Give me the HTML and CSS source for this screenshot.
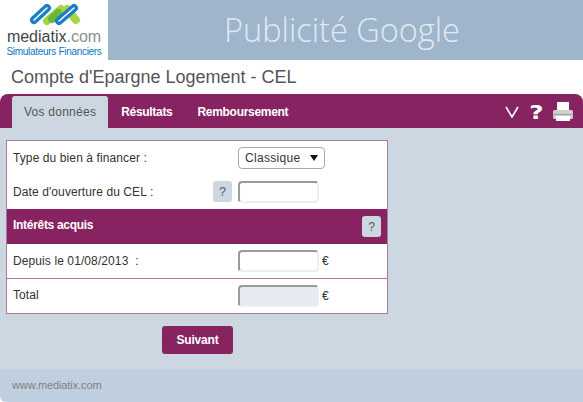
FILE: index.html
```html
<!DOCTYPE html>
<html>
<head>
    <meta charset="UTF-8">
    <title>Compte d'Epargne Logement - CEL</title>
    <link rel="stylesheet" href="styles.css">
</head>
<body>
<div class="top">
    <div class="logo">
        <svg class="logo-mark" width="54" height="25" viewBox="28 3 54 25">
            <g stroke-width="8" stroke-linecap="round" fill="none">
                <line x1="47" y1="21" x2="61" y2="9" stroke="#a4d645"/>
                <line x1="67" y1="9" x2="76" y2="20" stroke="#a4d645"/>
                <line x1="52" y1="19" x2="58" y2="13" stroke="#6cb536"/>
                <line x1="34" y1="20" x2="47" y2="8" stroke="#1b7fc4"/>
                <line x1="59" y1="21" x2="74" y2="8" stroke="#1b7fc4"/>
            </g>
            <g stroke="#ffffff" stroke-width="1.5" stroke-linecap="round">
                <line x1="34" y1="20" x2="47" y2="8"/>
                <line x1="59" y1="21" x2="74" y2="8"/>
            </g>
        </svg>
        <div class="logo-name">mediatix<span class="logo-com">.com</span></div>
        <div class="logo-sub">Simulateurs Financiers</div>
    </div>
    <div class="banner">Publicité Google</div>
</div>

<h1 class="title">Compte d'Epargne Logement - CEL</h1>

<div class="tabbar">
    <a class="tab active">Vos données</a>
    <a class="tab">Résultats</a>
    <a class="tab">Remboursement</a>
    <div class="tools">
        <svg class="tool-v" width="14" height="12" viewBox="0 0 14 12">
            <polyline points="1,1 7,11 13,1" fill="none" stroke="#ffffff" stroke-width="1.6"/>
        </svg>
        <span class="tool-help">?</span>
        <svg width="20" height="20" viewBox="0 0 20 20">
            <rect x="4" y="0" width="12" height="9" fill="#ffffff"/>
            <rect x="0" y="8" width="20" height="9" rx="1.5" fill="#cfcfcf"/>
            <rect x="0" y="12" width="20" height="1" fill="#a0a0a0"/>
            <rect x="3" y="14" width="14" height="5" fill="#ffffff"/>
        </svg>
    </div>
</div>

<div class="content">
    <div class="box">
        <div class="row row-first">
            <label class="lbl">Type du bien à financer :</label>
            <div class="field">
                <div class="select"><span>Classique</span><span class="arrow"></span></div>
            </div>
        </div>
        <div class="row row-second">
            <label class="lbl">Date d'ouverture du CEL :</label>
            <button class="help">?</button>
            <div class="field"><input class="inp" type="text"></div>
        </div>
        <div class="section">
            <span>Intérêts acquis</span>
            <button class="help">?</button>
        </div>
        <div class="row row-amount">
            <label class="lbl">Depuis le 01/08/2013 &nbsp;:</label>
            <div class="field"><input class="inp" type="text"><span class="euro">€</span></div>
        </div>
        <div class="row row-total">
            <label class="lbl lbl-total">Total</label>
            <div class="field"><input class="inp inp-off" type="text" disabled><span class="euro">€</span></div>
        </div>
    </div>
    <div class="actions">
        <button class="next">Suivant</button>
    </div>
</div>

<div class="footer">www.mediatix.com</div>
</body>
</html>
```

FILE: styles.css
```css
body {
    margin: 0;
    background-color: #FFFFFF;
    font-family: "Liberation Sans", Arial, sans-serif;
    font-size: 12px;
    color: #333333;
}

.top {
    display: flex;
    height: 60px;
}

.logo {
    width: 108px;
    flex: none;
    text-align: center;
    overflow: hidden;
}

.logo-mark {
    display: block;
    margin: 3px 0 0 28px;
}

.logo-name {
    font-size: 16px;
    line-height: 18px;
    color: #444444;
    white-space: nowrap;
}

.logo-com {
    color: #8a8f94;
}

.logo-sub {
    font-size: 10px;
    line-height: 12px;
    color: #0b76bd;
    white-space: nowrap;
    letter-spacing: -0.3px;
}

.banner {
    flex: 1;
    background-color: #9FB5CC;
    color: #E2E9F0;
    font-family: "Open Sans", sans-serif;
    font-weight: 300;
    font-size: 32.5px;
    line-height: 60px;
    text-align: center;
    padding-right: 7px;
}

.title {
    margin: 0;
    padding-left: 11px;
    height: 34px;
    line-height: 35px;
    font-size: 18px;
    font-weight: normal;
    color: #555555;
}

.tabbar {
    display: flex;
    height: 34px;
    background-color: #862360;
    border-radius: 8px 8px 0 0;
    padding-left: 12px;
    box-sizing: border-box;
}

.tab {
    font-weight: bold;
    letter-spacing: -0.3px;
    color: #FFFFFF;
    line-height: 36px;
    padding: 0 12px;
    margin-right: 1px;
}

.tab.active {
    margin-top: 2px;
    line-height: 32px;
    background-color: #CDD7E2;
    color: #555555;
    font-weight: normal;
    letter-spacing: 0.25px;
    border-radius: 3px 3px 0 0;
}

.tools {
    margin-left: auto;
    display: flex;
    align-items: center;
    gap: 10px;
    padding: 2px 10px 0 0;
    color: #FFFFFF;
}

.tool-v {
    margin-right: 1px;
}

.tool-help {
    font-family: "DejaVu Sans", sans-serif;
    font-size: 19px;
    font-weight: bold;
    transform: scaleX(1.3);
    margin: 0 1px;
}

.content {
    height: 241px;
    box-sizing: border-box;
    background-color: #CDD7E2;
    padding: 12px 6px 0;
}

.box {
    width: 382px;
    box-sizing: border-box;
    background-color: #FFFFFF;
    border: 1px solid #A77A9F;
}

.row {
    display: flex;
    align-items: center;
    padding-left: 6px;
}

.row-first {
    height: 33px;
}

.row-second {
    height: 35px;
}

.row-amount {
    height: 34px;
    border-bottom: 1px solid #A77A9F;
}

.row-total {
    height: 34px;
}

.lbl {
    flex: 1;
    color: #333333;
    letter-spacing: 0.1px;
}

.lbl-total {
    margin-bottom: 2px;
}

.field {
    width: 149px;
    flex: none;
    display: flex;
    align-items: center;
}

.select {
    width: 87px;
    height: 22px;
    box-sizing: border-box;
    border: 1px solid #A9A9A9;
    border-radius: 4px;
    display: flex;
    justify-content: space-between;
    align-items: center;
    padding: 0 6px;
    letter-spacing: 0.3px;
}

.arrow {
    width: 0;
    height: 0;
    border-left: 4px solid transparent;
    border-right: 4px solid transparent;
    border-top: 6px solid #111111;
}

.inp {
    width: 81px;
    height: 22px;
    box-sizing: border-box;
    border-style: solid;
    border-width: 2px;
    border-color: #9A9A9A #EEEEEE #EEEEEE #9A9A9A;
    border-radius: 4px;
    background-color: #FFFFFF;
    padding: 0;
    margin: 0;
}

.inp-off {
    background-color: #E6EAF1;
}

.euro {
    margin-left: 3px;
}

.help {
    width: 19px;
    height: 21px;
    padding: 0;
    margin-right: 6px;
    border: none;
    border-radius: 3px;
    background-color: #CDD7E2;
    color: #555555;
    font-family: "Liberation Sans", Arial, sans-serif;
    font-size: 12px;
    letter-spacing: 0;
    font-weight: normal;
}

.section {
    height: 35px;
    display: flex;
    justify-content: space-between;
    align-items: center;
    padding-left: 6px;
    background-color: #862360;
    color: #FFFFFF;
    font-weight: bold;
    letter-spacing: -0.3px;
}

.section span {
    margin-bottom: 3px;
}

.actions {
    width: 382px;
    display: flex;
    justify-content: center;
    margin-top: 12px;
}

.next {
    width: 71px;
    height: 28px;
    padding: 0 0 1px 1px;
    border: none;
    border-radius: 3px;
    background-color: #862360;
    color: #FFFFFF;
    font-family: "Liberation Sans", Arial, sans-serif;
    font-size: 12px;
    letter-spacing: -0.2px;
    font-weight: bold;
}

.footer {
    height: 33px;
    line-height: 33px;
    padding-left: 12px;
    background-color: #C0CFDF;
    color: #808080;
    font-size: 11px;
    letter-spacing: -0.1px;
    font-weight: 400;
    border-radius: 0 0 0 6px;
}
```
